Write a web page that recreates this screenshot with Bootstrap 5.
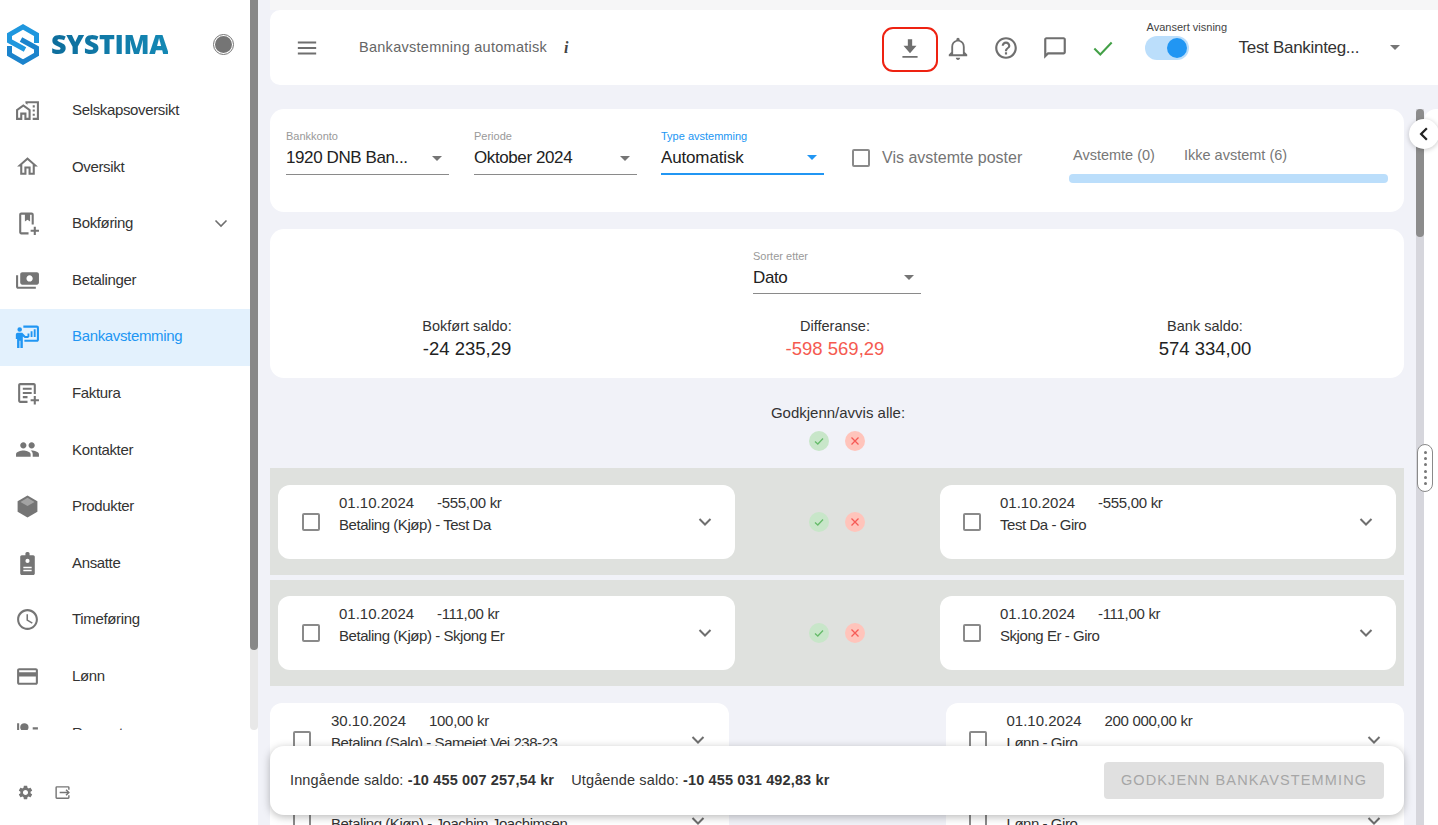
<!DOCTYPE html>
<html lang="no">
<head>
<meta charset="utf-8">
<title>Bankavstemming</title>
<link href="https://cdn.jsdelivr.net/npm/bootstrap@5.3.0/dist/css/bootstrap.min.css" rel="stylesheet">
<style>
html,body{height:100%;overflow:hidden}
body{font-family:"Liberation Sans",Arial,sans-serif;background:#f1f2f8;color:#333;font-size:15px}
svg{display:block;flex:none}
.app{height:825px}
.side{width:250px;background:#fff;flex:none}
.side-scroll{height:730px;overflow:hidden}
.brand{height:83px;padding:24px 16px 0 7px}
.brand-word{font-family:"Open Sans","Liberation Sans",sans-serif;font-weight:800;font-size:27px;line-height:40px;letter-spacing:-.4px;margin-left:12px;background:linear-gradient(90deg,#0d6d9c,#1488b4);-webkit-background-clip:text;background-clip:text;color:transparent}
.brand-dot{width:21px;height:21px;border-radius:50%;background:#757575;border:2px solid #fff;outline:1.5px solid #757575;outline-offset:-1px;margin-left:auto;margin-top:10px}
.side .nav-link{height:56.6px;padding:0 0 2px 15px;color:#333;font-size:15px;letter-spacing:-.35px}
.side .nav-link svg.ico{width:25px;height:25px;fill:#757575;margin-right:32px}
.side .nav-link.sel{background:#e3f1fd;color:#2196f3}
.side .nav-link.sel svg.ico{fill:#2196f3}
.side .nav-link .cube-top{fill:#a3a3a3}
.nav-chev{margin-right:22px}
.side-foot{height:95px;padding:30px 0 0 17px;gap:20px}
.side-foot svg{width:17px;height:17px;fill:#757575}
.side-foot svg.exit{fill:none;stroke:#757575;stroke-width:2}
.rail-wrap{width:8px;flex:none;background:#fff}
.rail{width:8px;flex:none;background:#e8e8e8;border-radius:0 0 4px 4px}
.rail-left{height:730px}
.rail-left .thumb{height:650px;background:#888;border-radius:0 0 4px 4px}
.rail-main{background:#d6d6dc;border-radius:0;margin-left:12px}
.rail-main .thumb{height:128px;background:#8c8c8c;border-radius:4px}
.pane{margin-left:12px;width:1168px}
.topband{border-top:10px solid #f6f6f7;height:85px;flex:none}
.topbar{height:75px;background:#fff;border-radius:10px 0 0 10px;padding-left:26px}
.topbar svg.tool{width:26px;height:26px;fill:#6f6f6f}
.topbar svg.burger{width:22px;height:22px}
.page-title{font-size:14.5px;color:#666;letter-spacing:.27px;margin-left:41px}
.page-i{font-family:"Liberation Serif",serif;font-style:italic;font-weight:700;font-size:16px;color:#444;margin-left:17px}
.dl-btn{width:56px;height:45px;border:2px solid #ee2211;border-radius:11px;margin-left:313px;margin-top:3px;background:transparent;padding:0}
.tool-slot{width:48.5px}
.bell-slot{margin-left:-4px}
.adv{width:82px;margin-left:17px;position:relative;height:24px}
.adv-label{font-size:11px;color:#444;white-space:nowrap;position:absolute;top:-17px;left:2px}
.tgl{width:44px;height:24px;background:#bbdefb;border-radius:12px;position:relative}
.tgl i{position:absolute;right:2px;top:2px;width:20px;height:20px;border-radius:50%;background:#2196f3}
.company{font-size:17px;color:#333;width:155px;margin-left:12px;letter-spacing:-.3px}
.caret-d{width:0;height:0;border-left:5.5px solid transparent;border-right:5.5px solid transparent;border-top:5.5px solid #757575;flex:none}
.company-caret{margin-left:-4px}
.work{min-height:0;margin-top:24px}
.scrollpart{width:1134px;flex:none;overflow:hidden}
.panel-r{flex:1;background:#fff;border-top-left-radius:12px}
.sheet{background:#fff;border-radius:14px;border:0}
.sheet-filter{height:103px;padding:20px 16px 0;margin-bottom:17px}
.fld{width:163px;flex:none}
.fld-wide{width:168px;margin-left:483px}
.fld-wide .fld-val{height:31px}
.fld-2{margin-left:25px}
.fld-3{margin-left:24px}
.fld-label{font-size:11px;color:#999;line-height:14px}
.fld-val{height:32px;border-bottom:1px solid #8a8a8a;font-size:17px;color:#222;padding-right:7px;padding-bottom:1px;letter-spacing:-.4px}
.fld.on .fld-val{letter-spacing:-.15px}
.fld.on .fld-label{color:#2196f3}
.fld.on .fld-val{border-bottom:2px solid #2196f3}
.fld.on .caret-d{border-top-color:#2196f3}
.boxy{width:18px;height:18px;border:2px solid #8a8a8a;border-radius:2px;flex:none}
.show-all{margin:17px 0 0 28px;width:217px}
.show-all-text{font-size:16px;color:#757575;margin-left:12px}
.tabs{width:319px;margin-top:15px}
.tab-head{font-size:14.5px;color:#777;padding-left:4px;line-height:22px}
.tab-first{width:111px}
.tab-bar{height:9px;background:#bbdefb;border-radius:4px;margin-top:8px}
.sheet-sum{height:149px;padding-top:20px}
.saldo-row{margin:22px 17px 0 13px}
.saldo-last{padding-left:4px}
.saldo-l{font-size:14.5px;color:#333;line-height:20px}
.saldo-v{font-size:18.5px;color:#222;line-height:26px}
.saldo-v.neg{color:#f55a50}
.bulk{height:90px;padding-top:25px;font-size:15px}
.bulk-title{padding-left:2px;line-height:20px}
.dot-group{gap:16px}
.bulk .dot-group{margin-top:8px}
.band .dot-group{margin-top:27px;padding-right:1px}
.dot-btn{width:20px;height:20px;border-radius:50%;flex:none}
.dot-ok{background:#c8e6c9}
.dot-no{background:#ffc4bb}
.dot-btn svg{width:20px;height:20px;fill:none;stroke-width:1.3}
.dot-ok svg{stroke:#66bb6a}
.dot-no svg{stroke:#f65a55}
.band{background:#dfe1de;padding:17px 8px 0;height:107px;margin-bottom:5px}
.band + .band{height:106px;margin-bottom:17px;padding-top:16px}
.txn{height:74px;border-radius:12px;background:#fff;width:457px;flex:none}
.txn-r{width:456px}
.plain .txn{width:458.5px}
.plain{margin-bottom:7px}
.txn .boxy{margin-left:24px;margin-right:19px}
.txn-r .boxy{margin-left:23px;margin-right:19px}
.plain .txn .boxy{margin-left:23px;margin-right:20px}
.txn-text{line-height:22px;padding-bottom:16px;font-size:15px;color:#333;flex-grow:1}
.txn-d{display:inline-block;width:98px}
.txn-a{letter-spacing:-.3px}
.txn-n{letter-spacing:-.45px}
.txn svg.chev{width:16px;height:16px;fill:none;stroke:#6f6f6f;stroke-width:2;margin-right:22px}
.plain .txn svg.chev{margin-right:23px}
.plain .txn + .txn svg.chev{margin-right:22px}
.floatbar{position:absolute;left:0;bottom:10px;width:1134px;height:69px;background:#fff;border-radius:14px;box-shadow:0 2px 8px rgba(0,0,0,.28);padding:0 20px;font-size:14.5px;color:#333;letter-spacing:.14px}
.float-b{margin-left:17px}
.ok-btn{width:280px;height:37px;background:#e0e0e0;color:#a6a6a6;font-size:14.5px;font-weight:500;letter-spacing:1.12px;border:0;border-radius:4px;text-transform:uppercase;padding:0}
.back-btn{position:absolute;left:1139px;top:10px;width:30px;height:30px;border-radius:50%;background:#fff;box-shadow:0 1px 5px rgba(0,0,0,.22)}
.grab{position:absolute;left:1147px;top:335px;width:16px;height:48px;border-radius:8px;background:#fff;border:1px solid #8a8a8a;gap:3.4px}
.grab i{width:3px;height:3px;border-radius:50%;background:#777}
</style>
</head>
<body>
<div class="app d-flex">
  <aside class="side d-flex flex-column">
    <div class="side-scroll">
      <div class="brand d-flex align-items-start">
        <svg width="32" height="41" viewBox="0 0 32 41" fill="none" stroke-width="5"><path d="M29.500 19V10.700L16 2.900 2.500 10.700V17L18 25.500" stroke="#1f97de"/><path d="M2.500 22V30.300L16 38.100 29.500 30.300V24L14 15.500" stroke="#1b83cc"/></svg>
        <span class="brand-word">SYSTIMA</span>
        <span class="brand-dot"></span>
      </div>
      <nav class="nav flex-column">
        <a class="nav-link d-flex align-items-center" href="#"><svg class="ico" viewBox="0 0 24 24"><path d="M1 11v10h6v-5h2v5h6V11L8 6l-7 5zm12 8h-2v-5H5v5H3v-7l5-3.500 5 3.500v7zM17 7h2v2h-2zm0 4h2v2h-2zm0 4h2v2h-2zM10 3v1.970l2 1.430V5h9v14h-4v2h6V3z"/></svg>Selskapsoversikt</a>
        <a class="nav-link d-flex align-items-center" href="#"><svg class="ico" viewBox="0 0 24 24"><path d="M12 5.690l5 4.500V18h-2v-6H9v6H7v-7.810l5-4.500M12 3L2 12h3v8h6v-6h2v6h6v-8h3L12 3z"/></svg>Oversikt</a>
        <a class="nav-link d-flex align-items-center" href="#"><svg class="ico" viewBox="0 0 24 24"><path d="M6 1.500h10c1.100 0 2 .9 2 2V13h-2V3.500h-1.500V10l-2.500-1.700L9.500 10V3.500H6v17h7v2H6c-1.100 0-2-.9-2-2v-17c0-1.100.9-2 2-2zM18 15h2v3h3v2h-3v3h-2v-3h-3v-2h3z"/></svg><span class="flex-grow-1">Bokføring</span><svg class="nav-chev" width="14" height="14" viewBox="0 0 14 14" fill="none" stroke="#6f6f6f" stroke-width="1.600"><path d="M1.500 4.500 7 10l5.500-5.500"/></svg></a>
        <a class="nav-link d-flex align-items-center" href="#"><svg class="ico" viewBox="0 0 24 24"><path transform="matrix(-1 0 0 1 24 0)" d="M19 14V6c0-1.100-.9-2-2-2H3c-1.100 0-2 .9-2 2v8c0 1.100.9 2 2 2h14c1.100 0 2-.9 2-2zm-9-1c-1.660 0-3-1.340-3-3s1.340-3 3-3 3 1.340 3 3-1.340 3-3 3zm13-6v11c0 1.100-.9 2-2 2H4v-2h17V7h2z"/></svg>Betalinger</a>
        <a class="nav-link sel d-flex align-items-center" href="#"><svg class="ico" viewBox="0 0 24 24"><path d="M4.500 3a2.200 2.200 0 1 1 0 4.400 2.200 2.200 0 0 1 0-4.400zM2.500 8.500h4.500L10 11.500h3v2H9.300L7.500 12v11H5.200v-7H4.300v7H2v-8.500H.8V10.500c0-1.100.7-2 1.700-2zM8 1.500h13c1.100 0 2 .9 2 2V15c0 1.100-.9 2-2 2H9v-2h12V3.500H8zM12 9h1.800v3.500H12zm3-2h1.800v5.500H15zm3-2h1.800v7.500H18z"/></svg>Bankavstemming</a>
        <a class="nav-link d-flex align-items-center" href="#"><svg class="ico" viewBox="0 0 24 24"><path d="M5 2h13c1.100 0 2 .9 2 2v8.500h-2V4H5v15h7v2H5c-1.100 0-2-.9-2-2V4c0-1.100.9-2 2-2zm2.500 4.500h8.500v2H7.500zm0 4h8.500v2H7.500zm0 4H12v2H7.500zM18 14.500h2v3h3v2h-3v3h-2v-3h-3v-2h3z"/></svg>Faktura</a>
        <a class="nav-link d-flex align-items-center" href="#"><svg class="ico" viewBox="0 0 24 24"><path d="M16 11c1.660 0 2.990-1.340 2.990-3S17.660 5 16 5c-1.660 0-3 1.340-3 3s1.340 3 3 3zm-8 0c1.660 0 2.990-1.340 2.990-3S9.660 5 8 5C6.340 5 5 6.340 5 8s1.340 3 3 3zm0 2c-2.330 0-7 1.170-7 3.500V19h14v-2.500c0-2.330-4.670-3.500-7-3.500zm8 0c-.29 0-.62.02-.97.05 1.160.84 1.970 1.970 1.970 3.450V19h6v-2.500c0-2.330-4.670-3.500-7-3.500z"/></svg>Kontakter</a>
        <a class="nav-link d-flex align-items-center" href="#"><svg class="ico" viewBox="0 0 24 24"><path d="M12 1.500 21.500 7v10L12 22.500 2.500 17V7z"/><path class="cube-top" d="M5.200 7.600 12 11.500l6.800-3.900L12 3.700z"/></svg>Produkter</a>
        <a class="nav-link d-flex align-items-center" href="#"><svg class="ico" viewBox="0 0 24 24"><path d="M6.500 4H10V2.500c0-.8.7-1.500 1.500-1.500h1c.8 0 1.500.7 1.500 1.500V4h3.500C18.400 4 19 4.700 19 5.500v16c0 .8-.6 1.500-1.500 1.500h-11C5.700 23 5 22.300 5 21.500v-16C5 4.700 5.700 4 6.500 4zM12 7.500a2 2 0 1 0 0 4 2 2 0 0 0 0-4zM8 15v1.500h8V15zm0 3v1.500h8V18z"/></svg>Ansatte</a>
        <a class="nav-link d-flex align-items-center" href="#"><svg class="ico" viewBox="0 0 24 24"><path d="M11.990 2C6.470 2 2 6.480 2 12s4.470 10 9.990 10C17.520 22 22 17.520 22 12S17.520 2 11.990 2zM12 20c-4.420 0-8-3.580-8-8s3.580-8 8-8 8 3.580 8 8-3.580 8-8 8zm.5-13H11v6l5.250 3.150.75-1.230-4.500-2.670z"/></svg>Timeføring</a>
        <a class="nav-link d-flex align-items-center" href="#"><svg class="ico" viewBox="0 0 24 24"><path d="M20 4H4c-1.110 0-1.990.89-1.990 2L2 18c0 1.110.89 2 2 2h16c1.110 0 2-.89 2-2V6c0-1.110-.89-2-2-2zm0 14H4v-6h16v6zm0-10H4V6h16v2z"/></svg>Lønn</a>
        <a class="nav-link d-flex align-items-center" href="#"><svg class="ico" viewBox="0 0 24 24"><path d="M9 11a4 4 0 1 0 0-8 4 4 0 0 0 0 8zm0 2c-2.700 0-8 1.300-8 4v2h16v-2c0-2.700-5.300-4-8-4zM2 3h2v8H2zm15 4h5v2h-5z"/></svg>Rapporter</a>
      </nav>
    </div>
    <div class="side-foot d-flex align-items-center mt-auto">
      <svg viewBox="0 0 24 24"><path d="M19.140 12.940c.04-.3.06-.61.06-.94 0-.32-.02-.64-.07-.94l2.030-1.580c.18-.14.23-.41.12-.61l-1.920-3.320c-.12-.22-.37-.29-.59-.22l-2.390.96c-.5-.38-1.030-.7-1.620-.94l-.36-2.540c-.04-.24-.24-.41-.48-.41h-3.840c-.24 0-.43.17-.47.41l-.36 2.540c-.59.24-1.130.57-1.620.94l-2.390-.96c-.22-.08-.47 0-.59.22L2.740 8.870c-.12.21-.08.47.12.61l2.030 1.580c-.05.3-.09.63-.09.94s.02.64.07.94l-2.030 1.580c-.18.14-.23.41-.12.61l1.920 3.320c.12.22.37.29.59.22l2.390-.96c.5.38 1.030.7 1.620.94l.36 2.540c.05.24.24.41.48.41h3.840c.24 0 .44-.17.47-.41l.36-2.540c.59-.24 1.130-.56 1.620-.94l2.390.96c.22.08.47 0 .59-.22l1.920-3.320c.12-.22.07-.47-.12-.61l-2.010-1.580zM12 15.600c-1.980 0-3.600-1.620-3.600-3.600s1.620-3.600 3.600-3.600 3.600 1.620 3.600 3.600-1.620 3.600-3.600 3.600z"/></svg>
      <svg class="exit" viewBox="0 0 24 24"><path d="M21 8V5c0-.6-.4-1-1-1H4c-.6 0-1 .4-1 1v14c0 .6.4 1 1 1h16c.6 0 1-.4 1-1v-3M8 12h13M17 8l4 4-4 4"/></svg>
    </div>
  </aside>
  <div class="rail-wrap"><div class="rail rail-left"><div class="thumb"></div></div></div>

  <div class="pane d-flex flex-column">
    <div class="topband">
      <header class="topbar d-flex align-items-center">
        <svg class="tool burger" viewBox="0 0 24 24"><path d="M2 5h20v2H2zm0 6h20v2H2zm0 6h20v2H2z"/></svg>
        <span class="page-title">Bankavstemning automatisk</span>
        <span class="page-i">i</span>
        <button class="dl-btn d-flex align-items-center justify-content-center" type="button" aria-label="Last ned"><svg class="tool" viewBox="0 0 24 24"><path d="M18 9h-4V3h-4v6H6l6 7 6-7zM5 18.500V20h14v-1.500H5z"/></svg></button>
        <span class="tool-slot bell-slot d-flex justify-content-center"><svg class="tool" viewBox="0 0 24 24"><path d="M12 23c1.100 0 2-.9 2-2h-4c0 1.100.9 2 2 2zm8.500-5-2.300-2.300V11c0-3.200-1.700-5.700-4.700-6.400V4a1.500 1.500 0 0 0-3 0v.6C7.500 5.300 5.800 7.800 5.800 11v4.700L3.500 18v1.500h17zM16.500 17.800h-9V11c0-2.800 1.800-4.900 4.500-4.900s4.500 2.100 4.500 4.900z"/></svg></span>
        <span class="tool-slot d-flex justify-content-center"><svg class="tool" viewBox="0 0 24 24"><path d="M11 18h2v-2h-2v2zm1-16C6.480 2 2 6.480 2 12s4.480 10 10 10 10-4.480 10-10S17.520 2 12 2zm0 18c-4.410 0-8-3.590-8-8s3.590-8 8-8 8 3.590 8 8-3.590 8-8 8zm0-14c-2.210 0-4 1.790-4 4h2c0-1.100.9-2 2-2s2 .9 2 2c0 2-3 1.750-3 5h2c0-2.250 3-2.500 3-5 0-2.210-1.790-4-4-4z"/></svg></span>
        <span class="tool-slot d-flex justify-content-center"><svg class="tool" viewBox="0 0 24 24"><path d="M20 2H4c-1.100 0-1.990.9-1.990 2L2 22l4-4h14c1.100 0 2-.9 2-2V4c0-1.100-.9-2-2-2zm0 14H5.170L4 17.170V4h16v12z"/></svg></span>
        <span class="tool-slot d-flex justify-content-center"><svg width="26" height="26" viewBox="0 0 24 24" fill="none" stroke="#43a047" stroke-width="1.900"><path d="M4 12.500 9.500 18 20 7"/></svg></span>
        <div class="adv"><span class="adv-label">Avansert visning</span><div class="tgl"><i></i></div></div>
        <span class="company">Test Bankinteg...</span>
        <span class="caret-d company-caret"></span>
      </header>
    </div>

    <div class="work d-flex flex-grow-1 position-relative">
      <main class="scrollpart">
        <section class="sheet sheet-filter card d-flex flex-row align-items-start">
          <div class="fld"><div class="fld-label">Bankkonto</div><div class="fld-val d-flex align-items-center justify-content-between">1920 DNB Ban...<span class="caret-d"></span></div></div>
          <div class="fld fld-2"><div class="fld-label">Periode</div><div class="fld-val d-flex align-items-center justify-content-between">Oktober 2024<span class="caret-d"></span></div></div>
          <div class="fld fld-3 on"><div class="fld-label">Type avstemming</div><div class="fld-val d-flex align-items-center justify-content-between">Automatisk<span class="caret-d"></span></div></div>
          <div class="show-all d-flex align-items-center"><span class="boxy"></span><span class="show-all-text">Vis avstemte poster</span></div>
          <div class="tabs">
            <div class="tab-head d-flex"><span class="tab-first">Avstemte (0)</span><span>Ikke avstemt (6)</span></div>
            <div class="tab-bar"></div>
          </div>
        </section>

        <section class="sheet sheet-sum card">
          <div class="fld fld-wide"><div class="fld-label">Sorter etter</div><div class="fld-val d-flex align-items-center justify-content-between">Dato<span class="caret-d"></span></div></div>
          <div class="row g-0 text-center saldo-row">
            <div class="col-4"><div class="saldo-l">Bokført saldo:</div><div class="saldo-v">-24 235,29</div></div>
            <div class="col-4"><div class="saldo-l">Differanse:</div><div class="saldo-v neg">-598 569,29</div></div>
            <div class="col-4 saldo-last"><div class="saldo-l">Bank saldo:</div><div class="saldo-v">574 334,00</div></div>
          </div>
        </section>

        <section class="bulk text-center">
          <div class="bulk-title">Godkjenn/avvis alle:</div>
          <div class="dot-group d-flex justify-content-center">
            <span class="dot-btn dot-ok"><svg viewBox="0 0 20 20"><path d="M6 10.500 8.800 13 14 7.500"/></svg></span>
            <span class="dot-btn dot-no"><svg viewBox="0 0 20 20"><path d="M6.500 6.500l7 7m0-7-7 7"/></svg></span>
          </div>
        </section>

        <section class="band d-flex justify-content-between">
          <div class="txn d-flex align-items-center"><span class="boxy"></span><div class="txn-text"><span class="txn-d">01.10.2024</span><span class="txn-a">-555,00 kr</span><br><span class="txn-n">Betaling (Kjøp) - Test Da</span></div><svg class="chev" viewBox="0 0 16 16"><path d="M2.500 5 8 10.500 13.500 5"/></svg></div>
          <div class="dot-group d-flex justify-content-center"><span class="dot-btn dot-ok"><svg viewBox="0 0 20 20"><path d="M6 10.500 8.800 13 14 7.500"/></svg></span><span class="dot-btn dot-no"><svg viewBox="0 0 20 20"><path d="M6.500 6.500l7 7m0-7-7 7"/></svg></span></div>
          <div class="txn txn-r d-flex align-items-center"><span class="boxy"></span><div class="txn-text"><span class="txn-d">01.10.2024</span><span class="txn-a">-555,00 kr</span><br><span class="txn-n">Test Da - Giro</span></div><svg class="chev" viewBox="0 0 16 16"><path d="M2.500 5 8 10.500 13.500 5"/></svg></div>
        </section>
        <section class="band d-flex justify-content-between">
          <div class="txn d-flex align-items-center"><span class="boxy"></span><div class="txn-text"><span class="txn-d">01.10.2024</span><span class="txn-a">-111,00 kr</span><br><span class="txn-n">Betaling (Kjøp) - Skjong Er</span></div><svg class="chev" viewBox="0 0 16 16"><path d="M2.500 5 8 10.500 13.500 5"/></svg></div>
          <div class="dot-group d-flex justify-content-center"><span class="dot-btn dot-ok"><svg viewBox="0 0 20 20"><path d="M6 10.500 8.800 13 14 7.500"/></svg></span><span class="dot-btn dot-no"><svg viewBox="0 0 20 20"><path d="M6.500 6.500l7 7m0-7-7 7"/></svg></span></div>
          <div class="txn txn-r d-flex align-items-center"><span class="boxy"></span><div class="txn-text"><span class="txn-d">01.10.2024</span><span class="txn-a">-111,00 kr</span><br><span class="txn-n">Skjong Er - Giro</span></div><svg class="chev" viewBox="0 0 16 16"><path d="M2.500 5 8 10.500 13.500 5"/></svg></div>
        </section>

        <section class="plain d-flex justify-content-between">
          <div class="txn d-flex align-items-center"><span class="boxy"></span><div class="txn-text"><span class="txn-d">30.10.2024</span><span class="txn-a">100,00 kr</span><br><span class="txn-n">Betaling (Salg) - Sameiet Vei 238-23</span></div><svg class="chev" viewBox="0 0 16 16"><path d="M2.500 5 8 10.500 13.500 5"/></svg></div>
          <div class="txn d-flex align-items-center"><span class="boxy"></span><div class="txn-text"><span class="txn-d">01.10.2024</span><span class="txn-a">200 000,00 kr</span><br><span class="txn-n">Lønn - Giro</span></div><svg class="chev" viewBox="0 0 16 16"><path d="M2.500 5 8 10.500 13.500 5"/></svg></div>
        </section>
        <section class="plain d-flex justify-content-between">
          <div class="txn d-flex align-items-center"><span class="boxy"></span><div class="txn-text"><span class="txn-d">02.10.2024</span><span class="txn-a">-250,00 kr</span><br><span class="txn-n">Betaling (Kjøp) - Joachim Joachimsen</span></div><svg class="chev" viewBox="0 0 16 16"><path d="M2.500 5 8 10.500 13.500 5"/></svg></div>
          <div class="txn d-flex align-items-center"><span class="boxy"></span><div class="txn-text"><span class="txn-d">02.10.2024</span><span class="txn-a">-250,00 kr</span><br><span class="txn-n">Lønn - Giro</span></div><svg class="chev" viewBox="0 0 16 16"><path d="M2.500 5 8 10.500 13.500 5"/></svg></div>
        </section>
      </main>
      <div class="rail rail-main"><div class="thumb"></div></div>
      <div class="panel-r"></div>

      <div class="floatbar d-flex align-items-center justify-content-between">
        <div><span>Inngående saldo: <b>-10 455 007 257,54 kr</b></span><span class="float-b">Utgående saldo: <b>-10 455 031 492,83 kr</b></span></div>
        <button class="ok-btn" type="button" disabled>Godkjenn bankavstemming</button>
      </div>
      <div class="back-btn d-flex align-items-center justify-content-center"><svg width="16" height="16" viewBox="0 0 14 14" fill="none" stroke="#222" stroke-width="2"><path d="M9.500 2 4.500 7l5 5"/></svg></div>
      <div class="grab d-flex flex-column align-items-center justify-content-center"><i></i><i></i><i></i><i></i><i></i><i></i></div>
    </div>
  </div>
</div>
<script src="https://cdn.jsdelivr.net/npm/bootstrap@5.3.0/dist/js/bootstrap.bundle.min.js"></script>
</body>
</html>
